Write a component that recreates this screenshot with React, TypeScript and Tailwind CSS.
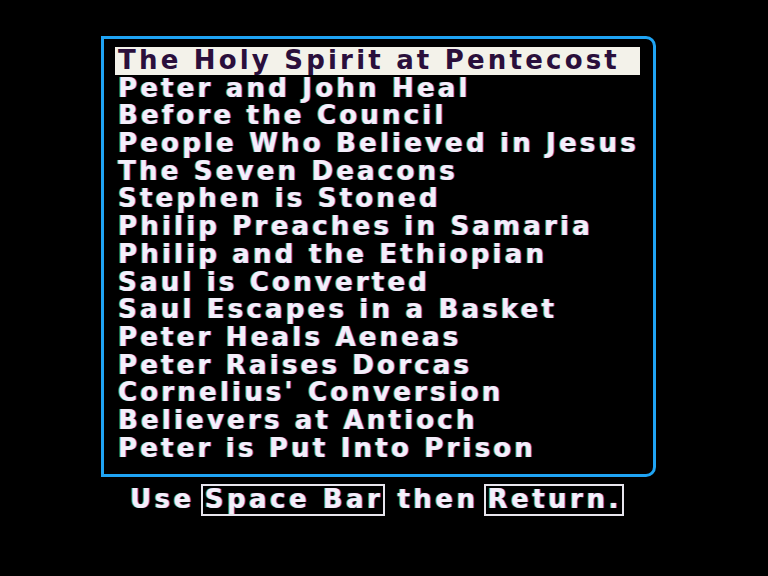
const lessons = [
  "The Holy Spirit at Pentecost",
  "Peter and John Heal",
  "Before the Council",
  "People Who Believed in Jesus",
  "The Seven Deacons",
  "Stephen is Stoned",
  "Philip Preaches in Samaria",
  "Philip and the Ethiopian",
  "Saul is Converted",
  "Saul Escapes in a Basket",
  "Peter Heals Aeneas",
  "Peter Raises Dorcas",
  "Cornelius' Conversion",
  "Believers at Antioch",
  "Peter is Put Into Prison",
];

const face = "font-['DejaVu_Sans','Verdana',sans-serif] font-bold";
const fringe = "[text-shadow:1px_0_0_rgba(170,90,255,0.75),-1px_0_0_rgba(120,220,70,0.7)]";

function KeyBox({ label, className = "" }: { label: string; className?: string }) {
  return (
    <span className={`h-[32px] border-2 border-[#e8e6ee] pl-[2px] flex items-center ${className}`}>
      {label}
    </span>
  );
}

export default function App() {
  const selected = 0;
  return (
    <div className={`w-[768px] h-[576px] bg-black overflow-hidden ${face}`}>
      <div className="pt-[36px] pl-[101px]">
        {/* lesson menu frame */}
        <div className="w-[555px] h-[441px] border-[3px] border-[#1fa4f4] rounded-tr-[10px] rounded-br-[10px] pt-[8px] pl-[11px]">
          <ul className="flex flex-col">
            {lessons.map((title, i) => (
              <li
                key={title}
                className={`w-[525px] h-[27.7px] leading-[27.7px] text-[26px] tracking-[3.2px] pl-[3px] whitespace-nowrap ${
                  i === selected
                    ? "bg-[#f3f2ea] text-[#2a0f3c]"
                    : `text-[#f4effa] ${fringe}`
                }`}
              >
                {title}
              </li>
            ))}
          </ul>
        </div>
      </div>
      {/* key hint */}
      <div
        className={`mt-[3px] w-[768px] pl-[130px] flex items-center text-[26px] tracking-[3.5px] text-[#f4effa] whitespace-nowrap ${fringe}`}
      >
        <span>Use</span>
        <KeyBox label="Space Bar" className="ml-[6px]" />
        <span className="ml-[12px]">then</span>
        <KeyBox label="Return." className="ml-[5px]" />
      </div>
    </div>
  );
}
